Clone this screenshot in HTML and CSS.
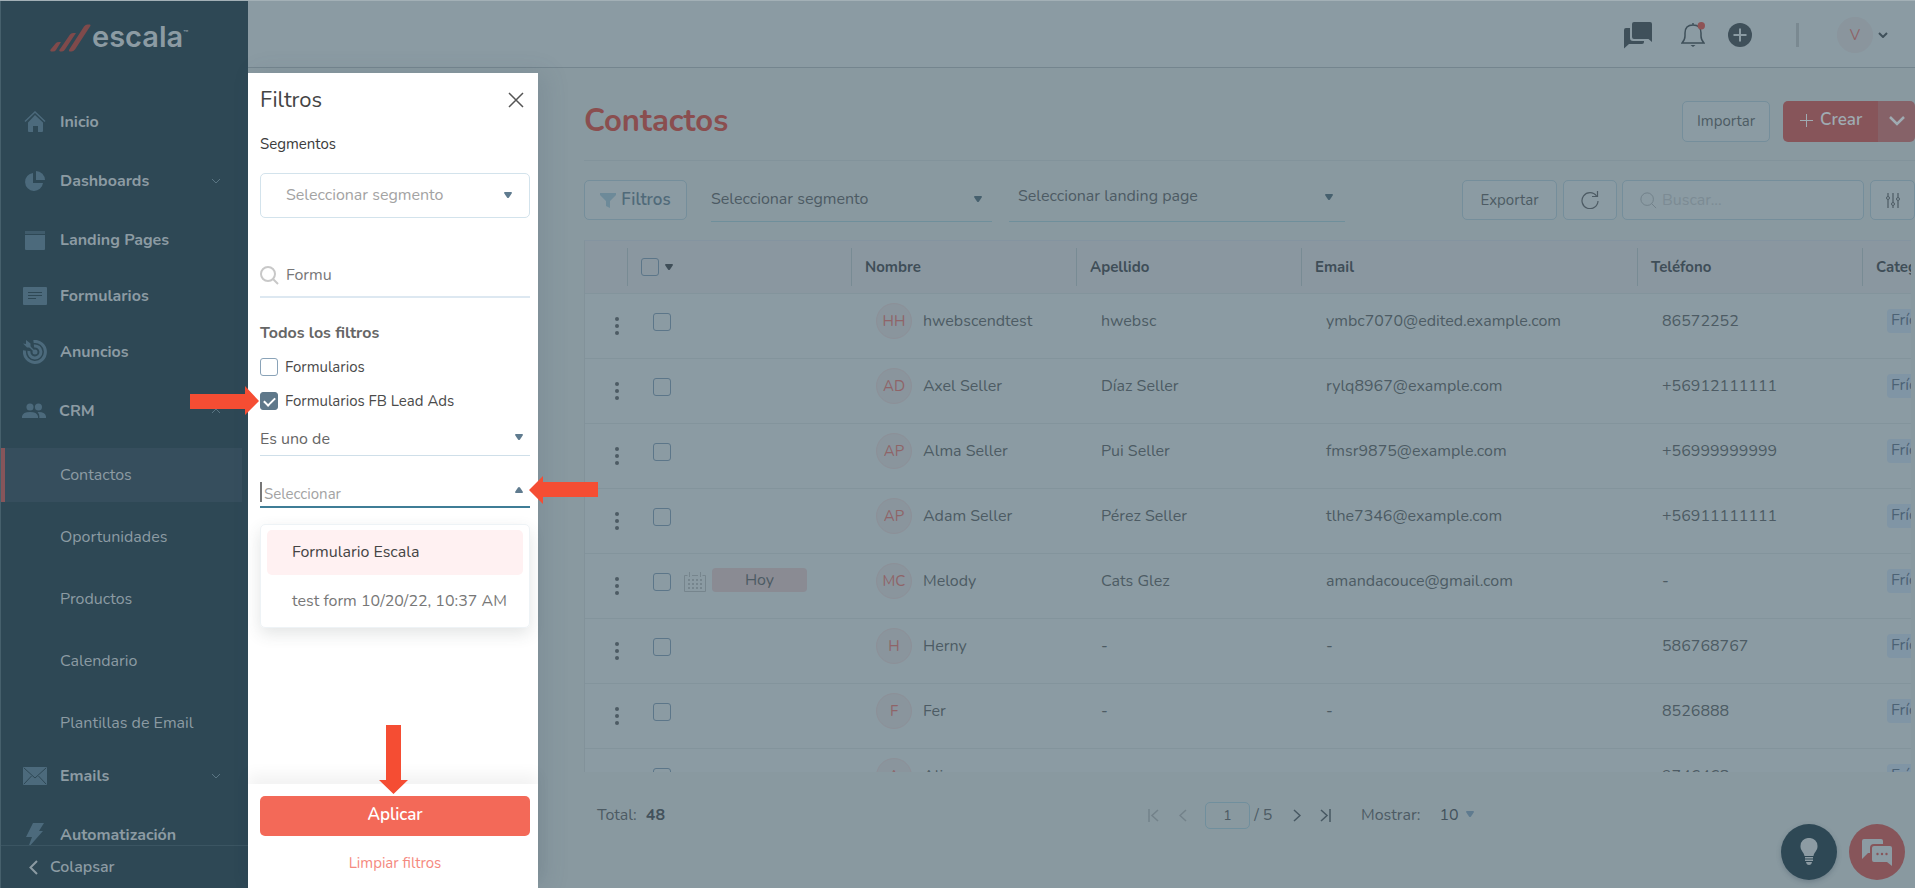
FILE: index.html
```html
<!DOCTYPE html>
<html lang="es">
<head>
  <meta charset="UTF-8" />
  <meta name="viewport" content="width=device-width, initial-scale=1.0"/>
  <title>Escala - Contactos</title>
  <link rel="stylesheet" href="styles.css">
</head>
<body>
  <svg class="sprite" aria-hidden="true">
    <symbol id="dots" viewBox="0 0 4 18"><circle cx="2" cy="2" r="2"/><circle cx="2" cy="9" r="2"/><circle cx="2" cy="16" r="2"/></symbol>
    <symbol id="caret" viewBox="0 0 8 6"><path d="M0 1q0-1 1-1h6q1 0 1 1L5 5.400q-1 1-2 0z"/></symbol>
    <symbol id="down" viewBox="0 0 10 6"><path d="M1 1l4 4 4-4" fill="none" stroke="currentColor"/></symbol>
    <symbol id="search" viewBox="0 0 19 19"><circle cx="8" cy="8" r="7" fill="none" stroke="currentColor"/><path d="M13 13l5 5" stroke="currentColor"/></symbol>
  </svg>

  <div class="app">
    <aside class="sidebar">
      <a class="logo" href="#">
        <svg width="41" height="28" viewBox="0 0 41 28">
          <path d="M1 25l5-6q1-1 3-1h2l-5 8q-1 1.500-3 1.500H1q-1.500-1 0-2.500zM10 25L20 10.500Q21 9 23 9h3L15 25.500q-1 2-3 2h-2q-1.500-1 0-2.500zM19.500 25L34 2.500Q35.500.500 37.500.500h2.500q1 1 0 2L25 25.500q-1.500 2-3.500 2h-2q-1-1 0-2.500z"/>
        </svg>
        <span>escala</span><sup>™</sup>
      </a>
      <nav class="menu">
        <a class="item" href="#">
          <svg width="22" height="22" viewBox="0 0 22 22"><path d="M1 10.500L11 1l10 9.500" fill="none" stroke="currentColor" stroke-width="1.500"/><path d="M11 4l8 7.500V20q0 1-1 1h-4v-6H9v6H5q-1 0-1-1v-8.500z"/></svg>
          Inicio
        </a>
        <a class="item group" href="#">
          <svg width="22" height="22" viewBox="0 0 22 22"><path d="M9 3v10h10a9 9 0 1 1-10-10z"/><path d="M12 1a9 9 0 0 1 9 9h-9z"/></svg>
          Dashboards
          <svg class="chev" width="10" height="6"><use href="#down"/></svg>
        </a>
        <a class="item" href="#">
          <svg width="22" height="22" viewBox="0 0 22 22"><path d="M1 2h20v3H1z" opacity=".6"/><path d="M1 6h20v14q0 1-1 1H2q-1 0-1-1z"/></svg>
          Landing Pages
        </a>
        <a class="item" href="#">
          <svg width="24" height="20" viewBox="0 0 24 20"><path d="M1 1h22q1 0 1 1v16q0 1-1 1H1q-1 0-1-1V2q0-1 1-1z"/><path d="M5 6.500h14M5 9.500h14M5 12.500h8" stroke="#2e4855" stroke-width="1"/></svg>
          Formularios
        </a>
        <a class="item" href="#">
          <svg width="24" height="24" viewBox="0 0 24 24"><path d="M10.500 1.500A10.500 10.500 0 1 1 1.500 10.500M11 6A6 6 0 1 1 6 11" fill="none" stroke="currentColor" stroke-width="3"/><circle cx="12" cy="12" r="2.500"/><path d="M12 12L4 4" fill="none" stroke="currentColor" stroke-width="1.500"/><path d="M0 3.500l3 .500V0l4.500 3.500V7.500H4z"/></svg>
          Anuncios
        </a>
        <a class="item group" href="#">
          <svg class="people" width="27" height="18" viewBox="0 0 27 18"><circle cx="9" cy="4.500" r="4"/><circle cx="18.500" cy="4.500" r="4"/><path d="M0 17v-2q1-5 9-5t9 5v2zM19.500 17v-2q0-3-2-4.700 8-.500 9.500 4.700v2z"/></svg>
          CRM
          <svg class="chev up" width="10" height="6"><use href="#down"/></svg>
        </a>
        <div class="submenu">
          <a class="active" href="#">Contactos</a>
          <a href="#">Oportunidades</a>
          <a href="#">Productos</a>
          <a href="#">Calendario</a>
          <a href="#">Plantillas de Email</a>
        </div>
        <a class="item group" href="#">
          <svg width="24" height="18" viewBox="0 0 24 18"><path d="M1 0h22q1 0 1 1v16q0 1-1 1H1q-1 0-1-1V1q0-1 1-1z"/><path d="M1 1l11 10L23 1M1 17l7.500-8M23 17l-7.500-8" fill="none" stroke="#2e4855"/></svg>
          Emails
          <svg class="chev" width="10" height="6"><use href="#down"/></svg>
        </a>
        <a class="item" href="#">
          <svg width="18" height="25" viewBox="0 0 18 25"><path d="M7 0h11l-5 8h4L2 25l4-11H0z"/></svg>
          Automatización
        </a>
      </nav>
      <button class="collapse">
        <svg width="9" height="15" viewBox="0 0 9 15"><path d="M8 1L1.500 7.500 8 14" fill="none" stroke="currentColor" stroke-width="2"/></svg>
        Colapsar
      </button>
    </aside>

    <div class="page">
      <header class="topbar">
        <button aria-label="Chat"><svg width="28" height="27" viewBox="0 0 28 27"><path d="M10 0h16q2 0 2 2v18l-3.500-3H10q-2 0-2-2V2q0-2 2-2z"/><path d="M2 6h4v10q0 3 3 3h11v1q0 2-2 2H5l-5 4.500V8q0-2 2-2z"/></svg></button>
        <button class="bell" aria-label="Notificaciones"><svg width="24" height="26" viewBox="0 0 24 26"><path d="M1 21q3-3 3-7v-3q0-8 8-8t8 8v3q0 4 3 7zM12 3V1" fill="none" stroke="currentColor" stroke-width="1.500"/><path d="M9.500 23h5l-2.500 2z"/><circle class="red" cx="20.300" cy="3.700" r="3.700"/></svg></button>
        <button class="add" aria-label="Agregar"><svg width="24" height="24" viewBox="0 0 24 24"><circle cx="12" cy="12" r="12"/><path d="M12 5.500v13M5.500 12h13" stroke="#8b9ba3" stroke-width="2"/></svg></button>
        <span class="sep"></span>
        <span class="avatar">V</span>
        <button class="user" aria-label="Cuenta"><svg width="10" height="6"><use href="#down" stroke-width="2"/></svg></button>
      </header>

      <div class="body">
        <section class="panel">
          <div class="panel-head">
            <h2>Filtros</h2>
            <button aria-label="Cerrar"><svg width="16" height="16" viewBox="0 0 16 16"><path d="M1 1l14 14M15 1L1 15" stroke="currentColor" stroke-width="1.500"/></svg></button>
          </div>
          <label class="seg-label" for="seg">Segmentos</label>
          <div class="select boxed">
            <select id="seg"><option>Seleccionar segmento</option></select>
            <svg width="8" height="6"><use href="#caret"/></svg>
          </div>
          <div class="find">
            <svg width="19" height="19" stroke-width="2"><use href="#search"/></svg>
            <input type="text" value="Formu" aria-label="Buscar filtro">
          </div>
          <h3>Todos los filtros</h3>
          <label class="check"><input type="checkbox"> Formularios</label>
          <label class="check">
            <input type="checkbox" checked> Formularios FB Lead Ads
            <svg class="arrow arrow-right" width="69" height="30" viewBox="0 0 69 30"><path d="M0 8h55V0l14 15-14 14v-6H0z"/></svg>
          </label>
          <div class="select line">
            <select aria-label="Condición"><option>Es uno de</option></select>
            <svg width="8" height="6"><use href="#caret"/></svg>
          </div>
          <div class="combo">
            <input type="text" placeholder="Seleccionar" aria-label="Seleccionar formulario">
            <svg class="up" width="8" height="6"><use href="#caret"/></svg>
            <svg class="arrow arrow-left" width="69" height="30" viewBox="0 0 69 30"><path d="M69 7H14V1L0 15l14 14v-7h55z"/></svg>
          </div>
          <ul class="options">
            <li class="hover">Formulario Escala</li>
            <li>test form 10/20/22, 10:37 AM</li>
          </ul>
          <div class="panel-foot">
            <svg class="arrow arrow-down" width="29" height="69" viewBox="0 0 29 69"><path d="M7 0h15v55h7L14.500 69 0 55h7z"/></svg>
            <button class="apply">Aplicar</button>
            <a href="#">Limpiar filtros</a>
          </div>
        </section>

        <main class="content">
          <div class="title-row">
            <h1>Contactos</h1>
            <button class="btn">Importar</button>
            <div class="create">
              <button class="create-main"><svg width="13" height="13" viewBox="0 0 13 13"><path d="M6.500 0v13M0 6.500h13" stroke="currentColor"/></svg>Crear</button>
              <button class="create-more" aria-label="Más opciones"><svg width="16" height="10" viewBox="0 0 16 10"><path d="M1 1l7 7 7-7" fill="none" stroke="currentColor" stroke-width="2.500"/></svg></button>
            </div>
          </div>

          <div class="toolbar">
            <button class="btn filter"><svg width="16" height="15" viewBox="0 0 16 15"><path d="M0 0h16v2l-6 6v7l-4-2V8L0 2z"/></svg>Filtros</button>
            <div class="select segment">
              <select aria-label="Segmento"><option>Seleccionar segmento</option></select>
              <svg width="8" height="6"><use href="#caret"/></svg>
            </div>
            <div class="select landing">
              <select aria-label="Landing page"><option>Seleccionar landing page</option></select>
              <svg width="8" height="6"><use href="#caret"/></svg>
            </div>
            <button class="btn export">Exportar</button>
            <button class="btn refresh" aria-label="Actualizar"><svg width="18" height="18" viewBox="0 0 18 18"><path d="M15.500 5A8 8 0 1 0 17 10M16.500 0v5.500H11" fill="none" stroke="currentColor" stroke-width="1.200"/></svg></button>
            <div class="search">
              <svg width="17" height="17"><use href="#search"/></svg>
              <input type="search" placeholder="Buscar..." aria-label="Buscar">
            </div>
            <button class="btn tune" aria-label="Columnas"><svg width="14" height="15" viewBox="0 0 14 15"><path d="M2 0v3M2 7v8M7 0v9M7 13v2M12 0v4M12 8v7" stroke="currentColor" stroke-width="1.200"/><g fill="none" stroke="currentColor"><circle cx="2" cy="5" r="1.500"/><circle cx="7" cy="11" r="1.500"/><circle cx="12" cy="6" r="1.500"/></g></svg></button>
          </div>

          <div class="grid">
            <table>
              <colgroup>
                <col class="c-menu"><col class="c-pick"><col class="c-std"><col class="c-std"><col class="c-mail"><col class="c-std"><col class="c-std">
              </colgroup>
              <thead>
                <tr>
                  <th aria-label="Acciones"></th>
                  <th><div><input type="checkbox" aria-label="Seleccionar todos"><svg width="8" height="6"><use href="#caret"/></svg></div></th>
                  <th><div>Nombre</div></th>
                  <th><div>Apellido</div></th>
                  <th><div>Email</div></th>
                  <th><div>Teléfono</div></th>
                  <th><div>Categoría</div></th>
                </tr>
              </thead>
              <tbody>
                <tr>
                  <td class="more"><svg width="4" height="18"><use href="#dots"/></svg></td>
                  <td><div class="pick"><input type="checkbox" aria-label="hwebscendtest"></div></td>
                  <td><div class="name"><span class="avatar">HH</span>hwebscendtest</div></td>
                  <td>hwebsc</td>
                  <td>ymbc7070@edited.example.com</td>
                  <td>86572252</td>
                  <td><span class="tag">Frío</span></td>
                </tr>
                <tr>
                  <td class="more"><svg width="4" height="18"><use href="#dots"/></svg></td>
                  <td><div class="pick"><input type="checkbox" aria-label="Axel Seller"></div></td>
                  <td><div class="name"><span class="avatar">AD</span>Axel Seller</div></td>
                  <td>Díaz Seller</td>
                  <td>rylq8967@example.com</td>
                  <td>+56912111111</td>
                  <td><span class="tag">Frío</span></td>
                </tr>
                <tr>
                  <td class="more"><svg width="4" height="18"><use href="#dots"/></svg></td>
                  <td><div class="pick"><input type="checkbox" aria-label="Alma Seller"></div></td>
                  <td><div class="name"><span class="avatar">AP</span>Alma Seller</div></td>
                  <td>Pui Seller</td>
                  <td>fmsr9875@example.com</td>
                  <td>+56999999999</td>
                  <td><span class="tag">Frío</span></td>
                </tr>
                <tr>
                  <td class="more"><svg width="4" height="18"><use href="#dots"/></svg></td>
                  <td><div class="pick"><input type="checkbox" aria-label="Adam Seller"></div></td>
                  <td><div class="name"><span class="avatar">AP</span>Adam Seller</div></td>
                  <td>Pérez Seller</td>
                  <td>tlhe7346@example.com</td>
                  <td>+56911111111</td>
                  <td><span class="tag">Frío</span></td>
                </tr>
                <tr>
                  <td class="more"><svg width="4" height="18"><use href="#dots"/></svg></td>
                  <td>
                    <div class="pick">
                      <input type="checkbox" aria-label="Melody">
                      <svg class="cal" width="22" height="20" viewBox="0 0 22 20"><path d="M3.500 3.500H.500v16h21v-16h-3M8 3.500h6M5.500 0v5M16.500 0v5" fill="none" stroke="currentColor"/><path d="M4 8h14M4 12h14M4 16h14" stroke="currentColor" stroke-width="2" stroke-dasharray="2 2"/></svg>
                      <span class="today">Hoy</span>
                    </div>
                  </td>
                  <td><div class="name"><span class="avatar">MC</span>Melody</div></td>
                  <td>Cats Glez</td>
                  <td>amandacouce@gmail.com</td>
                  <td>-</td>
                  <td><span class="tag">Frío</span></td>
                </tr>
                <tr>
                  <td class="more"><svg width="4" height="18"><use href="#dots"/></svg></td>
                  <td><div class="pick"><input type="checkbox" aria-label="Herny"></div></td>
                  <td><div class="name"><span class="avatar">H</span>Herny</div></td>
                  <td>-</td>
                  <td>-</td>
                  <td>586768767</td>
                  <td><span class="tag">Frío</span></td>
                </tr>
                <tr>
                  <td class="more"><svg width="4" height="18"><use href="#dots"/></svg></td>
                  <td><div class="pick"><input type="checkbox" aria-label="Fer"></div></td>
                  <td><div class="name"><span class="avatar">F</span>Fer</div></td>
                  <td>-</td>
                  <td>-</td>
                  <td>8526888</td>
                  <td><span class="tag">Frío</span></td>
                </tr>
                <tr>
                  <td class="more"><svg width="4" height="18"><use href="#dots"/></svg></td>
                  <td><div class="pick"><input type="checkbox" aria-label="Ali"></div></td>
                  <td><div class="name"><span class="avatar">A</span>Ali</div></td>
                  <td></td>
                  <td></td>
                  <td>9746468</td>
                  <td><span class="tag">Frío</span></td>
                </tr>
              </tbody>
            </table>
          </div>

          <footer class="pager">
            <p class="total">Total: <strong>48</strong></p>
            <div class="pages">
              <button class="off" aria-label="Primera"><svg width="11" height="13" viewBox="0 0 11 13"><path d="M1 0v13M10 1L4 6.500l6 5.500" fill="none" stroke="currentColor" stroke-width="1.500"/></svg></button>
              <button class="off" aria-label="Anterior"><svg width="8" height="13" viewBox="0 0 8 13"><path d="M7 1L1 6.500 7 12" fill="none" stroke="currentColor" stroke-width="1.500"/></svg></button>
              <span class="current"><input type="text" value="1" aria-label="Página"> / 5</span>
              <button aria-label="Siguiente"><svg width="8" height="13" viewBox="0 0 8 13"><path d="M1 1l6 5.500L1 12" fill="none" stroke="currentColor" stroke-width="1.500"/></svg></button>
              <button aria-label="Última"><svg width="11" height="13" viewBox="0 0 11 13"><path d="M10 0v13M1 1l6 5.500L1 12" fill="none" stroke="currentColor" stroke-width="1.500"/></svg></button>
            </div>
            <label for="size">Mostrar:</label>
            <div class="select size">
              <select id="size"><option>10</option></select>
              <svg width="8" height="6"><use href="#caret"/></svg>
            </div>
          </footer>
        </main>
      </div>
    </div>

    <div class="floating">
      <button class="help" aria-label="Ayuda"><svg width="18" height="28" viewBox="0 0 18 28"><path d="M9 0a8 8 0 0 1 8.500 8.500c0 4-3.500 6-4 9.500h-9C4 14.500.500 12.500.500 8.500A8 8 0 0 1 9 0zM5 19h8v1.500H5zM5 21.500h8V23H5zM6 24h6q-.500 3-3 3t-3-3z"/></svg></button>
      <button class="chat" aria-label="Chat de soporte"><svg width="30" height="27" viewBox="0 0 30 27"><path d="M2 0h17q2 0 2 2v3h-9q-4 0-4 4v5H6l-6 6V2q0-2 2-2z"/><path d="M12 7h16q2 0 2 2v18l-5-4H12q-2 0-2-2V9q0-2 2-2z"/><g fill="#87555a"><circle cx="15.500" cy="15" r="1.200"/><circle cx="20" cy="15" r="1.200"/><circle cx="24.500" cy="15" r="1.200"/></g></svg></button>
    </div>
  </div>
</body>
</html>
```
FILE: styles.css
```css
* { box-sizing: border-box; }
body {
  margin: 0;
  font-family: 'Nunito', 'Lato', sans-serif;
  font-size: 16px;
  line-height: 20px;
  color: #4d5b64;
  background: #8999a0;
}
button, input, select {
  font: inherit;
  color: inherit;
  background: none;
  border: none;
  padding: 0;
  margin: 0;
  border-radius: 0;
  outline: none;
}
button { cursor: pointer; }
a { color: inherit; text-decoration: none; }
h1, h2, h3, p, ul { margin: 0; padding: 0; }
svg { fill: currentColor; display: block; flex: none; }
.sprite { position: absolute; width: 0; height: 0; }
.app {
  display: flex;
  height: 100vh;
  overflow: hidden;
  border-top: 1px solid #a3b0b6;
}

/* sidebar */
.sidebar {
  width: 248px;
  flex: none;
  display: flex;
  flex-direction: column;
  background: #2e4855;
  color: #8c9ba3;
  border-left: 1px solid #46606c;
}
.logo {
  display: flex;
  align-items: center;
  height: 93px;
  padding: 0 0 30px 49px;
  font-family: 'Inter', sans-serif;
  font-size: 29px;
  font-weight: 600;
  flex: none;
}
.logo svg { color: #7f4a4b; margin-top: 10px; margin-right: 1px; }
.logo span { margin-top: 8px; }
.logo sup { font-size: 8px; line-height: 8px; }
.menu { flex: 1; min-height: 0; overflow: hidden; }
.item {
  display: flex;
  align-items: center;
  height: 56px;
  padding: 0 27px 0 22px;
  font-weight: 700;
}
.item svg:first-child { color: #4c6a7c; width: 24px; margin-right: 13px; }
.item .people { margin-left: -1px; margin-right: 12px; overflow: visible; }
.group { height: 62px; }
.chev { color: #5a7583; margin-left: auto; }
.up { transform: rotate(180deg); }
.submenu {
  display: flex;
  flex-direction: column;
  gap: 8px;
  padding-top: 6px;
  margin-bottom: -5px;
}
.submenu a {
  height: 54px;
  line-height: 54px;
  padding-left: 59px;
  margin-right: 6px;
}
.submenu .active {
  padding-left: 55px;
  background: #364e5d;
  border-left: 4px solid #87555a;
}
.collapse {
  display: flex;
  align-items: center;
  gap: 12px;
  height: 43px;
  padding-left: 28px;
  font-weight: 600;
  border-top: 1px solid #3b5562;
  flex: none;
}

/* top bar */
.page { flex: 1; min-width: 0; display: flex; flex-direction: column; }
.topbar {
  display: flex;
  align-items: center;
  justify-content: flex-end;
  height: 67px;
  padding: 2px 27px 0 0;
  background: #8b9ba3;
  border-bottom: 1px solid #74858e;
  color: #3f505a;
  flex: none;
}
.bell { margin-left: 29px; }
.add { margin-left: 23px; }
.red { fill: #8e5355; }
.sep { width: 3px; height: 24px; margin: 0 38px 0 44px; background: #7a8991; }
.user { margin-left: 5px; }
.avatar {
  display: inline-block;
  width: 36px;
  height: 36px;
  line-height: 34px;
  border: 1px solid #8d9098;
  border-radius: 50%;
  background: #8a959d;
  color: #8f6468;
  font-size: 15px;
  text-align: center;
  flex: none;
}
.topbar .avatar { border-color: #8a959d; }
.body { flex: 1; min-height: 0; display: flex; }

/* filters panel */
.panel {
  width: 290px;
  flex: none;
  margin-top: 5px;
  padding: 0 8px 0 12px;
  display: flex;
  flex-direction: column;
  background: #fff;
  color: #4a4a4a;
  box-shadow: 8px 0 22px rgba(70, 90, 110, 0.15);
  position: relative;
}
.panel-head {
  display: flex;
  align-items: center;
  justify-content: space-between;
  height: 53px;
  padding-right: 6px;
}
h2 { font-size: 22px; font-weight: 400; color: #444; }
.panel-head button { color: #555; }
.seg-label { margin: 8px 0 19px; color: #3c3c3c; font-size: 15px; }
.select { position: relative; }
.select select { width: 100%; height: 100%; appearance: none; }
.select svg {
  position: absolute;
  right: 17px;
  top: 50%;
  margin-top: -4px;
  color: #5f7b8f;
  pointer-events: none;
}
.boxed {
  height: 45px;
  border: 1px solid #d3e3ec;
  border-radius: 5px;
  color: #a3a3a3;
}
.boxed select { padding: 0 0 2px 25px; }
.find {
  display: flex;
  align-items: center;
  gap: 7px;
  height: 44px;
  margin-top: 36px;
  border-bottom: 2px solid #dde8f1;
}
.find svg { color: #c8c8c8; }
.find input { width: 100%; color: #777; }
h3 { font-size: 16px; font-weight: 700; margin: 25px 0 14px; color: #666; }
input[type="checkbox"] {
  appearance: none;
  width: 18px;
  height: 18px;
  border: 1px solid #8aa3b8;
  border-radius: 3px;
  flex: none;
}
.check {
  display: flex;
  align-items: center;
  gap: 7px;
  height: 20px;
  margin-bottom: 14px;
  font-size: 15px;
  position: relative;
}
.check input:checked { background: #5f788a; border-color: #5f788a; }
.check input:checked::after {
  content: "";
  display: block;
  width: 9px;
  height: 5px;
  margin: 4px 0 0 3px;
  border-left: 2px solid #fff;
  border-bottom: 2px solid #fff;
  transform: rotate(-45deg);
}
.line {
  height: 31px;
  border-bottom: 1px solid #cfdfe9;
  color: #666;
}
.line select { padding-bottom: 2px; }
.line svg { right: 7px; margin-top: -6px; }
.combo {
  display: flex;
  align-items: center;
  height: 26px;
  margin-top: 26px;
  padding-right: 7px;
  border-bottom: 2px solid #3f7d96;
  color: #5f7b8f;
  position: relative;
}
.combo input {
  width: 100%;
  height: 20px;
  margin-bottom: 4px;
  padding: 4px 0 0 2px;
  border-left: 2px solid #777;
  font-size: 15px;
}
.combo input::placeholder { color: #a3a3a3; }
.combo svg { margin-bottom: 8px; }
.options {
  margin: 16px 0 0;
  padding: 5px 6px 3px;
  list-style: none;
  border: 1px solid #eef3f6;
  border-radius: 5px;
  box-shadow: 0 6px 16px rgba(60, 70, 70, 0.14);
  color: #777;
}
.options li { height: 45px; line-height: 44px; margin-bottom: 4px; padding-left: 25px; border-radius: 5px; }
.options li:last-child { margin: 0; }
.options .hover { background: #fff1f2; color: #444; }
.panel-foot {
  display: flex;
  flex-direction: column;
  align-items: center;
  height: 104px;
  margin: auto -8px 0 -12px;
  padding: 12px 8px 0 12px;
  background: #fff;
  box-shadow: 0 -10px 14px rgba(0, 0, 0, 0.05);
  color: #f58a80;
  font-size: 15px;
  position: relative;
}
.apply {
  width: 100%;
  height: 40px;
  margin-bottom: 17px;
  padding-bottom: 2px;
  border-radius: 5px;
  background: #f36958;
  color: #fff;
  font-size: 17px;
  font-weight: 600;
}
.arrow { position: absolute; color: #f54d33; }
.arrow-right { right: 271px; top: -5px; }
.combo .arrow-left { left: 269px; top: -7px; margin: 0; }
.arrow-down { left: 131px; top: -59px; }

/* contacts */
.content {
  flex: 1;
  min-width: 0;
  display: flex;
  flex-direction: column;
  padding-left: 46px;
}
.title-row {
  display: flex;
  align-items: center;
  height: 93px;
  padding-top: 14px;
  border-bottom: 1px solid #82939b;
  flex: none;
}
h1 { flex: 1; font-size: 31px; line-height: 40px; font-weight: 700; color: #8a4e4f; }
.btn {
  display: flex;
  align-items: center;
  justify-content: center;
  height: 40px;
  border: 1px solid #758e9b;
  border-radius: 5px;
  background: #8b9ba3;
  font-size: 15px;
  flex: none;
}
.title-row .btn { width: 88px; height: 41px; margin-right: 13px; }
.create { display: flex; height: 41px; border-radius: 5px; overflow: hidden; color: #9fabb2; }
.create-main {
  display: flex;
  align-items: center;
  gap: 7px;
  padding: 0 0 2px 17px;
  width: 95px;
  background: #87555a;
  font-size: 17px;
  font-weight: 600;
}
.create-more { display: grid; place-items: center; width: 37px; background: #866268; }
.toolbar { display: flex; align-items: flex-start; margin: 19px 0 18px; flex: none; }
.filter { width: 103px; margin-right: 24px; gap: 5px; font-size: 17px; font-weight: 600; color: #506a79; }
.filter svg { color: #6d8a99; }
.toolbar .select { height: 42px; border-bottom: 1px solid #6f8f9b; }
.toolbar .select select { padding-bottom: 4px; }
.toolbar .select svg { right: 10px; margin-top: -5px; color: #46606e; }
.segment { width: 281px; margin-right: 17px; }
.landing { width: 336px; margin-right: auto; }
.toolbar .landing select { padding: 0 0 10px 9px; }
.toolbar .landing svg { right: 12px; margin-top: -7px; }
.export { width: 95px; margin-right: 6px; }
.refresh { width: 54px; margin-right: 5px; }
.search {
  display: flex;
  align-items: center;
  gap: 5px;
  width: 242px;
  height: 40px;
  margin-right: 6px;
  padding: 0 17px;
  border: 1px solid #758e9b;
  border-radius: 5px;
  background: #8b9ba3;
}
.search svg { color: #6f7e87; }
.search input { flex: 1; min-width: 0; }
.search input::placeholder { color: #7c8b94; }
.tune { width: 45px; }
.grid {
  flex: 1;
  min-height: 0;
  overflow: hidden;
  margin-right: 4px;
  border-top: 1px solid #8494a0;
  border-left: 1px solid #82929a;
  background: #8b9ba3;
}
table { width: 1501px; table-layout: fixed; border-collapse: collapse; }
.c-menu { width: 42px; }
.c-pick { width: 224px; }
.c-std { width: 225px; }
.c-mail { width: 336px; }
thead { background: #8a97a0; color: #3f4e58; }
th { height: 52px; padding: 0; text-align: left; font-size: 15px; font-weight: 700; }
th div {
  display: flex;
  align-items: center;
  gap: 6px;
  height: 38px;
  padding-left: 13px;
  border-left: 1px solid #788b94;
}
.grid input[type="checkbox"] { border: 1px solid #5c7689; }
td { height: 65px; padding: 0 0 10px 25px; border-top: 1px solid #83949c; white-space: nowrap; }
.more { padding: 0 0 0 30px; }
.pick { display: flex; align-items: center; padding: 2px 0 0 1px; }
.cal { margin-left: 13px; color: #76858d; }
.today {
  width: 95px;
  height: 24px;
  margin-left: 6px;
  line-height: 24px;
  margin-bottom: 3px;
  border-radius: 4px;
  background: #8a8b93;
  text-align: center;
}
.name { display: flex; align-items: center; gap: 11px; }
.tag {
  display: inline-block;
  height: 24px;
  line-height: 22px;
  padding: 0 6px 0 4px;
  border-radius: 4px;
  background: #8095a5;
  color: #4c6275;
}
.pager { display: flex; align-items: center; height: 86px; padding-left: 13px; margin-bottom: 30px; flex: none; }
.total { width: 551px; }
.total strong { margin-left: 5px; color: #43525c; }
.pages { display: flex; align-items: center; margin-right: 30px; }
.pages button { color: #475862; padding-right: 19px; }
.pages button:last-child { padding: 0; }
.pages .off { color: #73828a; padding-right: 20px; }
.pages .off + .off { padding-right: 18px; }
.current { width: 88px; }
.current input {
  width: 45px;
  height: 27px;
  border: 1px solid #708f9d;
  border-radius: 5px;
  font-size: 14px;
  text-align: center;
}
.size { width: 60px; height: 27px; margin-left: 19px; color: #43525c; }
.size svg { right: 26px; top: 9px; margin: 0; }

/* floating help buttons */
.floating { position: absolute; right: 10px; bottom: 8px; display: flex; gap: 12px; }
.floating button { display: grid; place-items: center; width: 56px; height: 56px; border-radius: 50%; color: #8c9ba3; }
.help { background: #2e4855; box-shadow: 0 2px 5px rgba(50, 70, 85, 0.3); }
.chat { background: #87555a; }
```
